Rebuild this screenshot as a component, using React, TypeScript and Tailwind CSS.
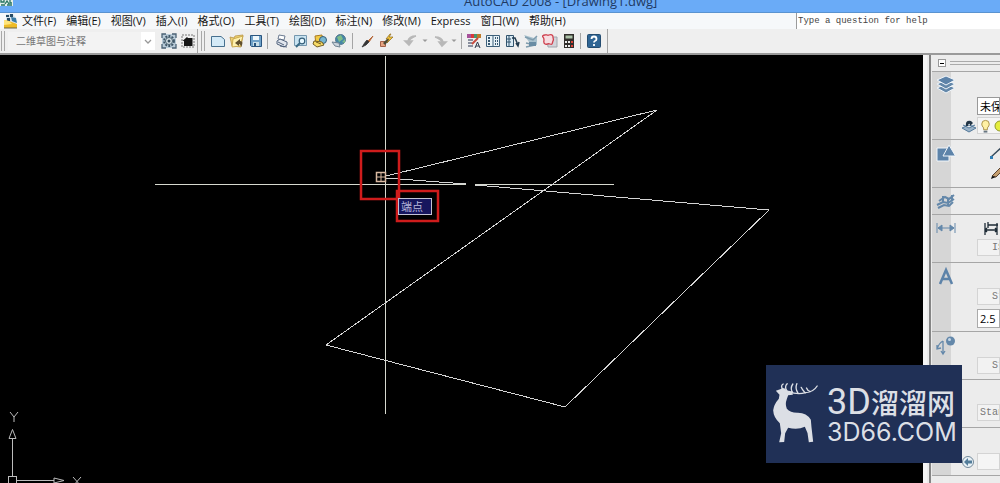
import React from "react";

type IconProps = { children: React.ReactNode; className?: string };

function Icon({ children, className = "h-4 w-4" }: IconProps) {
  return (
    <svg viewBox="0 0 16 16" className={"shrink-0 " + className} aria-hidden="true">
      {children}
    </svg>
  );
}

function Tool({ label, children }: { label: string; children: React.ReactNode }) {
  return (
    <button type="button" aria-label={label} className="flex h-5 w-[19px] shrink-0 items-center justify-center">
      <Icon>{children}</Icon>
    </button>
  );
}

function Divider() {
  return <div className="mx-0.5 h-4 w-px shrink-0 bg-[#a5a5a5]" />;
}

function Grip() {
  return (
    <div className="flex h-5 shrink-0 gap-0.5 px-px">
      <div className="w-px bg-[#a8a8a8]" />
      <div className="w-px bg-[#a8a8a8]" />
    </div>
  );
}

const menus = [
  "文件(F)", "编辑(E)", "视图(V)", "插入(I)", "格式(O)", "工具(T)",
  "绘图(D)", "标注(N)", "修改(M)", "Express", "窗口(W)", "帮助(H)",
];

function TitleBar() {
  return (
    <header className="flex h-[13px] shrink-0 items-end overflow-hidden border-b border-[#5a93d0] bg-[#6aabf7]">
      <svg viewBox="0 0 13 7" className="h-[7px] w-[13px] shrink-0 self-start" aria-hidden="true">
        <rect width="13" height="6" fill="#e4efe9" />
        <path d="M1 0v2h3V0M5 4l2-3 2 3M10 0v3h2M1 5h4M7 5h5" fill="none" stroke="#277463" strokeWidth="1.3" />
      </svg>
      <h1 className="ml-[451px] pb-[3px] font-['Open_Sans',sans-serif] text-[13px] leading-4 whitespace-nowrap text-[#1f3a63]">
        AutoCAD 2008 - [Drawing1.dwg]
      </h1>
    </header>
  );
}

function MenuBar() {
  return (
    <nav className="flex h-4 shrink-0 items-center bg-[#f6f8fa]">
      <svg viewBox="0 0 14 15" className="ml-1 h-[15px] w-3.5 shrink-0" aria-hidden="true">
        <path d="M2 0h7l3 4v6H2z" fill="#d8e4ec" />
        <path d="M2 1h3v2H2zM6 0h3v3H6zM3 4h3v3H3z" fill="#284c65" />
        <path d="M7 3l5 1 1 5-5-2z" fill="#397ba5" />
        <path d="M0 6l5 1 8 3v4H0z" fill="#eebc28" />
        <path d="M0 6l5 1 3 3-8 1z" fill="#ffe57b" />
        <path d="M0 14h13" stroke="#6b6540" />
      </svg>
      <ul className="ml-1 flex flex-1 gap-2.5 text-[11px] leading-4 text-[#151515]">
        {menus.map((m) => (
          <li key={m} className="whitespace-nowrap">
            <button type="button">{m}</button>
          </li>
        ))}
      </ul>
      <input
        aria-label="Type a question for help"
        placeholder="Type a question for help"
        className="h-4 w-[204px] border-l border-[#9b9b9b] bg-white pl-px font-['Liberation_Mono',monospace] text-[9px] text-[#444] outline-none placeholder:text-[#444]"
      />
    </nav>
  );
}

function Page() {
  return <path d="M1.500 3.500h9.500l3.500 3v7h-13z" fill="#d4eaf7" stroke="#47708f" />;
}

function Toolbars() {
  return (
    <div className="flex h-[26px] shrink-0 items-center border-b-2 border-[#9a9a9a] bg-[#efefef]">
      <div className="flex h-full w-[198px] items-center border-r border-[#a5a5a5]">
        <Grip />
        <div className="relative ml-0.5 flex h-5 w-[147px] items-center">
          <select aria-label="工作空间" disabled className="block h-[18px] w-full appearance-none bg-[#f3f3f3] pl-2 font-['Noto_Sans_CJK_SC',sans-serif] text-[10px] leading-4 text-[#777] opacity-100">
            <option>二维草图与注释</option>
          </select>
          <svg viewBox="0 0 14 18" className="pointer-events-none absolute top-px right-0 h-[18px] w-3.5 bg-white" aria-hidden="true">
            <path d="M4 8l3 3 3-3" fill="none" stroke="#999" strokeWidth="1.300" />
          </svg>
        </div>
        <div className="ml-1 flex">
          <Tool label="工作空间设置">
            <rect x="1" y="1" width="14" height="14" fill="#b9cbd8" />
            <path d="M1 5V1h4M11 1h4v4M15 11v4h-4M5 15H1v-4" fill="none" stroke="#4b6274" strokeWidth="1.300" />
            <circle cx="8" cy="8" r="5" fill="none" stroke="#3c5364" strokeWidth="1.800" strokeDasharray="2 1.200" />
            <circle cx="8" cy="8" r="3.500" fill="#d8e3e8" stroke="#465d6c" />
            <circle cx="8" cy="8" r="1.500" fill="#354b5c" />
          </Tool>
          <Tool label="我的工作空间">
            <rect x="2" y="2" width="12" height="12" fill="none" stroke="#777" strokeDasharray="2 1" />
            <path d="M2.500 8L7 4l1 1h4.500v8H4V8z" fill="#151515" />
          </Tool>
        </div>
      </div>
      <div className="flex h-full w-[410px] items-center border-r border-[#a5a5a5] pl-0.5">
        <Grip />
        <div className="ml-0.5 flex items-center">
          <Tool label="新建"><Page /></Tool>
          <Tool label="打开">
            <path d="M1 4l4 1 1-2 8-1-2 12-9-1z" fill="#efd374" stroke="#b89344" strokeWidth=".8" />
            <path d="M4 6l10-3-3 10-8 1z" fill="#fff1ae" stroke="#c29e40" strokeWidth=".8" />
            <path d="M6 10l5-4v2c3 0 3 3 1 6 0-2-1-3-2-3v2z" fill="#604f2d" />
          </Tool>
          <Tool label="保存">
            <path d="M2.500 2.500h11v11h-10l-1-1z" fill="#70a2c9" stroke="#29557f" />
            <path d="M5 3h6v4H5z" fill="#eef7fb" /><path d="M5 9h6v4H5z" fill="#c9dfe9" /><path d="M6 10h2v3H6z" fill="#29557f" />
          </Tool>
          <Divider />
          <div className="w-0.5" />
          <Tool label="打印">
            <path d="M5 2l6 1-1 4-6-1z" fill="#fff" stroke="#6c7b91" />
            <path d="M3 8l3-2 7 3v3l-3 2-7-3z" fill="#e1e6ee" stroke="#52627c" />
            <path d="M4 9l6 3M6 13l7 1" stroke="#52627c" />
          </Tool>
          <Tool label="打印预览">
            <path d="M1.500 2.500h12v10h-12z" fill="#c9e3f1" stroke="#7597ae" />
            <circle cx="9" cy="8" r="2.800" fill="#e8f8ff" stroke="#345e7a" strokeWidth="1.200" /><path d="M7 10l-4 4" stroke="#396a85" strokeWidth="2" />
          </Tool>
          <Tool label="发布">
            <path d="M3 3l7-1 1 8-7 2z" fill="#f1ca45" stroke="#aa7a22" />
            <circle cx="11" cy="7" r="3.500" fill="#79b7d0" stroke="#345e7a" />
            <path d="M2 8l8 1 2 3-7 2-4-3z" fill="#f7db65" stroke="#735e24" /><path d="M4 9l5 2" stroke="#735e24" />
          </Tool>
          <Tool label="三维 DWF">
            <circle cx="9.500" cy="6.500" r="5" fill="#4587a8" stroke="#56788f" />
            <path d="M6 4l4-2 2 4-4 3zM11 9l3-3v4z" fill="#7fbd88" /><path d="M1 9l7 1 1 4-5-1z" fill="#ccd5dd" stroke="#718493" />
          </Tool>
          <div className="w-0.5" />
          <Divider />
          <div className="w-0.5" />
          <Tool label="特性匹配"><path d="M14 3L9 8l1 1z" fill="#d97b34" stroke="#b36639" /><path d="M8 7l2 2-3 3-4 2c1-1 2-4 5-7z" fill="#343434" stroke="#343434" strokeWidth=".8" /></Tool>
          <Tool label="块编辑器">
            <path d="M2.500 8.500h5v5h-5z" fill="#e6a482" stroke="#a3624a" /><path d="M5 10l6-6 2 1-6 7z" fill="#4c4c38" /><path d="M12 1L8 6h3l-2 4 6-6h-4l2-3z" fill="#f5c638" stroke="#8d6c22" strokeWidth=".7" />
          </Tool>
          <div className="w-1.5" />
          <Tool label="放弃"><path d="M2 8h7l-3 4zM5 8q1-5 8-5M5.500 8Q8 4 13 3" fill="#b8b8b8" stroke="#b8b8b8" strokeWidth="1.600" /></Tool>
          <button type="button" aria-label="放弃列表" className="flex h-4 w-2.5 items-center justify-center"><Icon className="h-2 w-2"><path d="M3 5h10l-5 5z" fill="#999" /></Icon></button>
          <Tool label="重做"><path d="M14 9H7l3 4zM11 9q-1-5-8-5M10.500 9Q8 5 3 4" fill="#b8b8b8" stroke="#b8b8b8" strokeWidth="1.600" /></Tool>
          <button type="button" aria-label="重做列表" className="flex h-4 w-2.5 items-center justify-center"><Icon className="h-2 w-2"><path d="M3 5h10l-5 5z" fill="#999" /></Icon></button>
          <Divider />
          <Tool label="特性">
            <path d="M1 1h4v4H1z" fill="#a7509a" /><path d="M5 1h3v4H5z" fill="#d83939" /><path d="M8 1h3v4H8z" fill="#46966f" /><path d="M11 1h4v4h-4z" fill="#bd7a29" />
            <path d="M2 7h5M2 10h4M2 13h5" stroke="#6a7084" strokeWidth="1.300" /><path d="M9 15l2.500-6 2.500 6M10 13h3" fill="none" stroke="#30394a" /><path d="M6 11l6-6" stroke="#c74b3f" strokeWidth="2" />
          </Tool>
          <Tool label="设计中心">
            <path d="M1.500 2.500h13v11h-13zM8 2v12" fill="#e9f3f8" stroke="#3d607a" /><path d="M4 4v8M10 5h1M12 5h1M10 8h1M12 8h1M10 11h1M12 11h1" stroke="#385972" strokeWidth="2" strokeDasharray="2 1" />
          </Tool>
          <Tool label="工具选项板">
            <path d="M2.500 2.500h7v11h-7z" fill="#d9eaf4" stroke="#31536c" /><path d="M5 3v10M2 6h5M2 9h5" stroke="#31536c" /><path d="M8 5h3l3 7M12 10l2 3 1-4" fill="none" stroke="#253d50" strokeWidth="1.500" />
          </Tool>
          <Tool label="图纸集管理器">
            <path d="M1 2l10 3 3-1v8l-8-3z" fill="#a9c1cd" /><path d="M2 4l8 3 4-4M3 10l9 2-9 2" fill="none" stroke="#7e9bac" strokeWidth="1.500" /><path d="M6 9h7v4H6z" fill="#6a8da4" />
          </Tool>
          <Tool label="标记集管理器">
            <path d="M5 4h10v10H6z" fill="#d1d4da" stroke="#a2a6ad" /><path d="M3 2c2-1 2 1 4 0s4 0 4 2 1 2 0 4 0 4-3 3-3 1-5 0-1-3-1-4 0-2-1-3 0-2 2-2z" fill="#f7dde1" stroke="#cf3f4d" strokeWidth="1.300" />
          </Tool>
          <Tool label="快速计算器">
            <path d="M3 1h10v14H3z" fill="#302e2b" /><path d="M4.500 2.500h7v3h-7z" fill="#acc2a8" /><path d="M4 8h2v2H4zM7 8h2v2H7zM4 12h2v2H4zM7 12h2v2H7z" fill="#eee" /><path d="M10 8h2v2h-2zM10 12h2v2h-2z" fill="#dd4438" />
          </Tool>
          <Divider />
          <div className="w-px" />
          <Tool label="帮助">
            <rect x="1.500" y="1.500" width="13" height="13" rx="1" fill="#2f6594" stroke="#244c70" /><path d="M5.500 6q0-2.500 2.500-2.500T10.500 6q0 1.500-1.500 2-1 .5-1 1.500M8 11v2" fill="none" stroke="white" strokeWidth="1.800" />
          </Tool>
        </div>
      </div>
    </div>
  );
}

function Drawing() {
  return (
    <main className="relative min-w-0 flex-1 overflow-hidden bg-black">
      <svg width="923" height="428" viewBox="0 55 923 428" className="block max-w-none" role="img" aria-label="Drawing1">
        <g fill="none" stroke="#d4d4d4" shapeRendering="crispEdges">
          <path d="M385.500 56v358M155 184.500h311M475 184.500h139" stroke="#d6d9cf" />
          <path d="M386 176L657 110 326 345 565 407 769 210 475 185M386 178l80 6" />
        </g>
        <g fill="none" stroke="#d8b8a0">
          <rect x="376.500" y="172.500" width="9" height="9" strokeWidth="1.500" />
          <path d="M381 173v8M377 177h8" />
        </g>
        <g fill="none" stroke="#bcbcbc">
          <path d="M12.500 477v-38M9 438.500l3.500-9 3.500 9zM17 480.500h37M54 478l10 2.500-10 2.500z" />
          <rect x="8.500" y="476.500" width="8" height="8" />
          <path d="M10 412l4 5 4-5M14 417v5M73 477l8 9M81 477l-8 9" />
        </g>
        <g fill="none" stroke="#cf1c1c" strokeWidth="2.500">
          <rect x="361" y="151" width="38" height="48" />
          <rect x="397" y="191" width="41" height="30" />
        </g>
      </svg>
      <div className="absolute top-[143px] left-[398px] h-[17px] w-[34px] border border-[#c2c2d4] bg-[#16165e] px-0.5 text-[11px] leading-[15px] text-[#b8b8dc]">
        端点
      </div>
    </main>
  );
}

function Row({ height, icon, children }: { height: string; icon?: React.ReactNode; children?: React.ReactNode }) {
  return (
    <section className={"flex shrink-0 overflow-hidden border-t border-[#a6a6a6] " + height}>
      <div className="w-[19px] shrink-0 bg-[#d6d6d6] pt-0.5 pl-1">
        {icon && <svg viewBox="0 0 20 22" className="relative h-[22px] w-5 max-w-none" aria-hidden="true">{icon}</svg>}
      </div>
      <div className="flex min-w-0 flex-1 flex-col">{children}</div>
    </section>
  );
}

function Field({ label, value, className }: { label: string; value: string; className: string }) {
  return (
    <input aria-label={label} readOnly defaultValue={value} className={"ml-[26px] h-[17px] shrink-0 border outline-none " + className} />
  );
}

const dim = "border-[#d4d4d4] bg-[#f2f2f2] font-['Liberation_Mono',monospace] text-[10px] text-[#777]";

function Dashboard() {
  return (
    <aside className="flex w-[77px] shrink-0 overflow-hidden border-l-4 border-[#f5f5f5] bg-[#ececec]">
      <div className="ml-0.5 w-0.5 shrink-0 bg-[#858585]" />
      <div className="ml-px flex min-w-0 flex-1 flex-col">
        <div className="flex h-4 shrink-0 items-center gap-1 pl-1.5">
          <button type="button" aria-label="收起" className="flex h-2 w-2 items-center justify-center border border-[#999] bg-white">
            <span className="h-px w-1 bg-black" />
          </button>
          <div className="h-1 flex-1 border-y border-[#aaa]" />
        </div>
        <Row height="h-[68px]" icon={<g stroke="#f0f5fa"><path d="M1 14l9-4 9 4-9 5z" fill="#6488aa" /><path d="M1 10l9-4 9 4-9 5z" fill="#6488aa" /><path d="M1 6l9-4 9 4-9 5z" fill="#5d83a9" /></g>}>
          <Field label="图层状态" value="未保存的图层状态" className="mt-[25px] h-[18px] border-[#999] bg-white pl-0.5 text-[11px] text-black" />
          <div className="mt-0.5 flex items-center pl-2.5">
            <Icon><path d="M1 10l7-3 7 3-7 4zM2 7l6 3 6-3" fill="#9ab3c9" stroke="#54799a" /><path d="M5 8q-1-6 5-5l2 2-3 3V6q-2-1-2 2z" fill="#223546" /></Icon>
            <div className="flex h-[17px] flex-1 border border-[#d4d4d4] bg-[#f5f5f5]">
              <Icon className="h-4 w-[15px]"><path d="M4 6a4 4 0 018 0q0 2-2 4v2H6v-2Q4 8 4 6z" fill="#fff1a4" stroke="#a79045" /><path d="M6 13h4v2H6z" fill="#687682" /></Icon>
              <Icon><circle cx="7" cy="8" r="5" fill="#e5ee3f" stroke="#91992b" /></Icon>
            </div>
          </div>
        </Row>
        <Row height="h-12" icon={<g fill="#5d83a9" stroke="#f0f5fa"><path d="M1 6h12v13H1z" /><path d="M13 3l6.500 11H7z" /></g>}>
          <div className="flex flex-col items-start gap-1 pt-1 pl-[38px]">
            <Icon><path d="M2 13L14 2" stroke="#34495a" strokeWidth="1.300" /><path d="M1 12h3v3H1z" fill="#317db5" /></Icon>
            <Icon><path d="M3 12L14 1l2 3-9 9z" fill="#c49e6f" stroke="#5a4430" /><path d="M3 12l4 1-5 2z" fill="#111" /></Icon>
          </div>
        </Row>
        <Row height="h-[27px]" icon={<g stroke="#6488aa" strokeWidth="2"><path d="M1 15l6-3 5 1 6-4M3 11l6-4 4 2 5-4M2 18l6-3 5 1 4-4M7 6v6M12 8v7M16 5v6" fill="none" /></g>} />
        <Row height="h-12" icon={<path d="M1 6v10M19 6v10M2 11h16M6 8l-4 3 4 3zM14 8l4 3-4 3z" fill="#6488aa" stroke="#6488aa" />}>
          <div className="pt-1.5 pl-8"><Icon><path d="M2 2v12M14 2v12M2 9h12M5 1v6M5 4h10M4 7L2 9l2 2M12 7l2 2-2 2" fill="none" stroke="#1d2a35" strokeWidth="1.300" /></Icon></div>
          <Field label="标注样式" value="ISO-25" className={"mt-0.5 pl-3.5 " + dim} />
        </Row>
        <Row height="h-[69px]" icon={<path d="M4 19L10 5l6 14M6 14h8" fill="none" stroke="#5d83a9" strokeWidth="2.500" />}>
          <Field label="文字样式" value="Standard" className={"mt-[25px] pl-3.5 " + dim} />
          <Field label="文字高度" value="2.5" className="mt-1 h-[19px] border-[#aaa] bg-white pl-0.5 text-[11px] text-black" />
        </Row>
        <Row height="h-12" icon={<g><circle cx="14.500" cy="7" r="4.500" fill="#6488aa" /><circle cx="13.500" cy="5.500" r="1.500" fill="#c4d7e7" /><path d="M7 7v13M7 7Q3 9 1 15M1 11v4l4-1M5 17l2 3 2-3" fill="none" stroke="#6488aa" strokeWidth="1.300" /></g>}>
          <Field label="多重引线样式" value="Standard" className={"mt-[25px] pl-3.5 " + dim} />
        </Row>
        <Row height="h-12"><Field label="表格样式" value="Standard" className={"mt-6 pl-0.5 " + dim} /></Row>
        <Row height="h-12">
          <div className="mt-[25px] flex items-center pl-2.5">
            <Icon><circle cx="7" cy="8" r="5.500" fill="#e8f1f6" stroke="#73899a" /><path d="M3 8l4-4v2.500h4v3H7V12z" fill="#527c99" /></Icon>
            <div className="h-[17px] flex-1 border border-[#d4d4d4] bg-[#f5f5f5]" />
          </div>
        </Row>
        <div className="flex-1 border-t border-[#a6a6a6]" />
      </div>
    </aside>
  );
}

function Watermark() {
  return (
    <div className="absolute top-[365px] left-[766px] flex h-[98px] w-[196px] items-center bg-[#203056] text-[#dcdfe5]">
      <svg viewBox="18 15 170 294" className="h-[98px] w-[57px] shrink-0" aria-hidden="true">
        <path d="M47 92L62 87Q69 80 80 91L97 97 98 104 84 106 80 117Q74 133 80 146 90 158 111 158 139 157 152 179L154 202 159 245 146 247 142 219 134 200Q112 211 84 203L75 220 72 246 57 247 63 220 59 190Q40 173 39 151 41 133 56 116L58 104z" fill="currentColor" />
        <path d="M68 88Q60 78 69 72M80 92Q72 80 81 71M86 94Q110 105 136 98 160 96 171 78M97 97Q89 85 98 72M113 98Q104 85 110 71M135 99Q126 89 123 82M150 95Q142 92 139 84" fill="none" stroke="currentColor" strokeWidth="4" strokeLinecap="round" />
      </svg>
      <div className="flex flex-col pl-1 whitespace-nowrap">
        <div className="flex items-center leading-9">
          <span className="w-11 font-['Roboto',sans-serif] text-[36px]">3D</span>
          <span className="font-['Noto_Sans_CJK_SC',sans-serif] text-[28px] font-medium">溜溜网</span>
        </div>
        <span className="font-['Inter',sans-serif] text-[25px] leading-6">3D66.COM</span>
      </div>
    </div>
  );
}

export default function App() {
  return (
    <div className="relative flex h-screen flex-col overflow-hidden bg-[#efefef] font-['Open_Sans','Noto_Sans_CJK_SC',sans-serif]">
      <TitleBar />
      <MenuBar />
      <Toolbars />
      <div className="flex min-h-0 flex-1">
        <Drawing />
        <Dashboard />
      </div>
      <Watermark />
    </div>
  );
}
